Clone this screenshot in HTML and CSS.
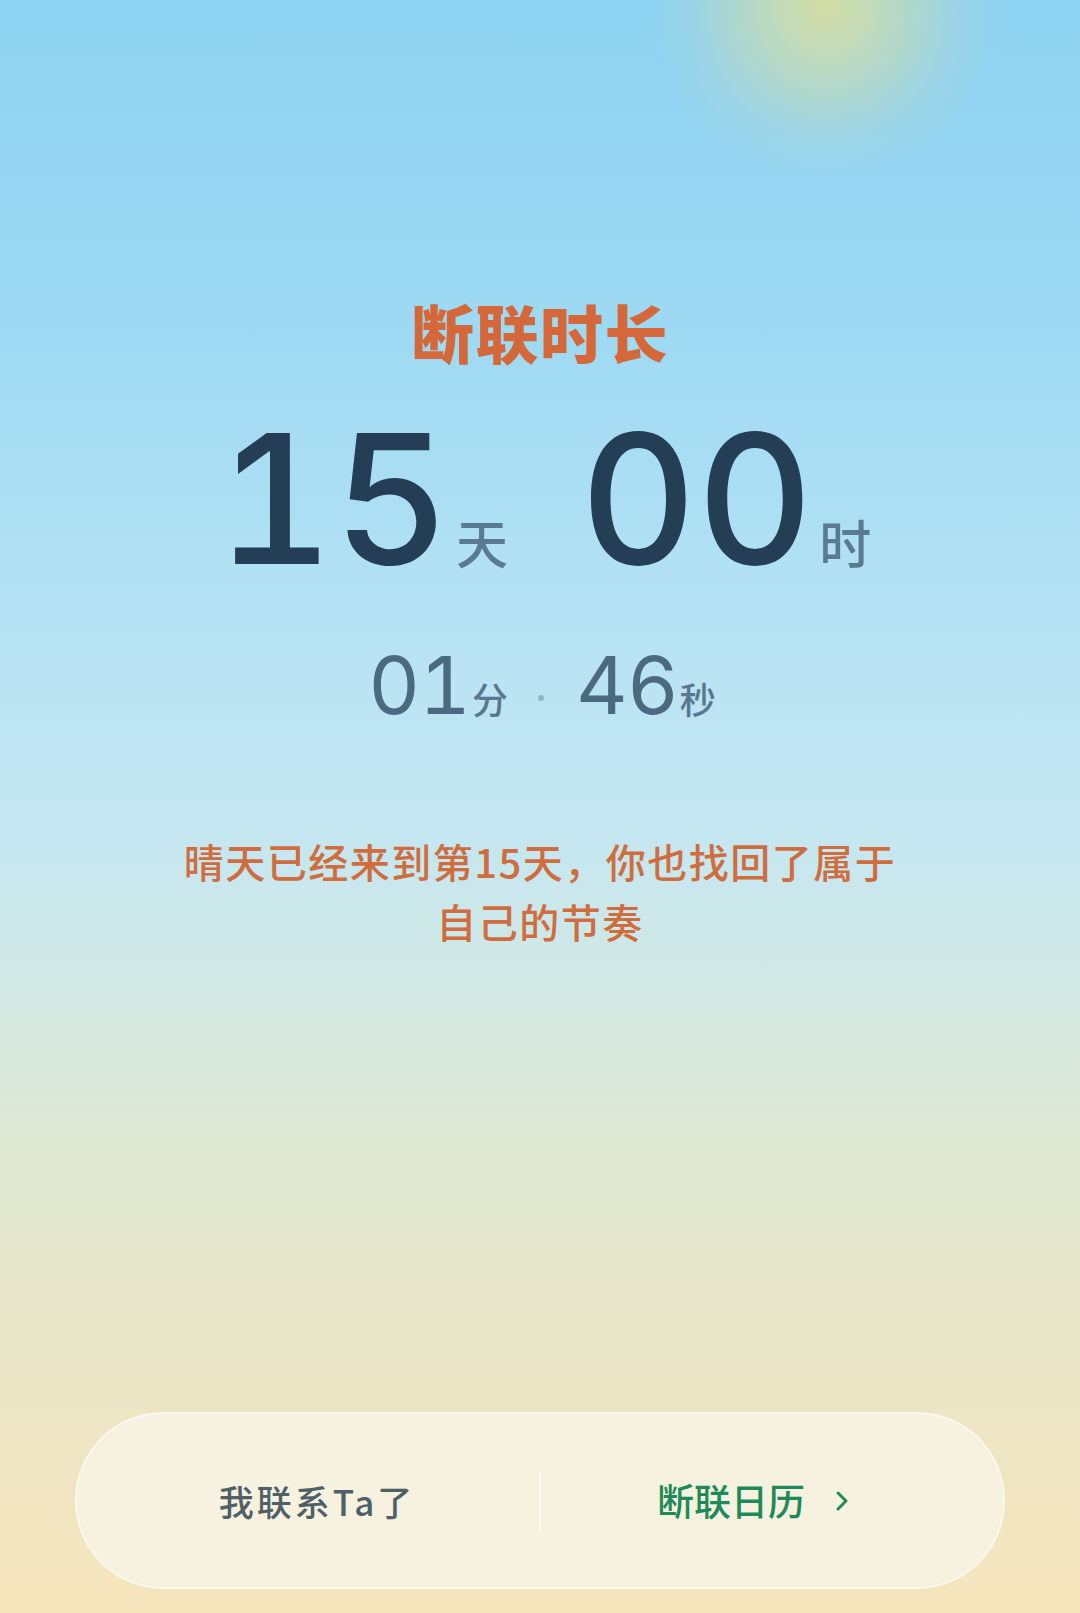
FILE: index.html
```html
<!DOCTYPE html>
<html lang="zh-CN">
<head>
<meta charset="utf-8">
<title>断联时长</title>
<link rel="stylesheet" href="styles.css">
</head>
<body>
<div class="screen">
  <h1 class="title">断联时长</h1>
  <div class="big-row">
    <span class="big-num">15</span><span class="big-unit">天</span>
    <span class="big-num second">00</span><span class="big-unit">时</span>
  </div>
  <div class="small-row">
    <span class="small-num">01</span><span class="small-unit">分</span>
    <span class="dot"></span>
    <span class="small-num">46</span><span class="small-unit second">秒</span>
  </div>
  <p class="message">晴天已经来到第15天，你也找回了属于自己的节奏</p>
  <div class="bar">
    <div class="btn btn-left">我联系Ta了</div>
    <div class="divider"></div>
    <div class="btn btn-right">断联日历
      <svg class="chev" width="14" height="22" viewBox="0 0 14 22"><path d="M3 3 L11 11 L3 19" fill="none" stroke="#1f8a59" stroke-width="3" stroke-linecap="round" stroke-linejoin="round"/></svg>
    </div>
  </div>
</div>
</body>
</html>
```
FILE: styles.css
```css
html, body {
  margin: 0;
  padding: 0;
}
body {
  font-family: "Noto Sans CJK SC", "Noto Sans", sans-serif;
}
.screen {
  width: 1080px;
  height: 1613px;
  display: flex;
  flex-direction: column;
  align-items: center;
  overflow: hidden;
  background:
    radial-gradient(circle at 826px 6px, rgba(214,220,160,0.95) 0px, rgba(205,220,172,0.85) 40px, rgba(188,217,192,0.7) 90px, rgba(168,213,218,0.45) 132px, rgba(150,212,240,0) 176px),
    linear-gradient(to bottom, #8dd2f1 0px, #9fdaf3 350px, #b8e3f4 650px, #c6e7f0 850px, #d3e8e2 1000px, #e0e8d3 1150px, #e9e6c9 1330px, #efe6c3 1450px, #f5e5bc 1613px);
}
.title {
  margin: 299px 0 0;
  font-size: 63px;
  line-height: 64px;
  font-weight: 900;
  color: #d4683a;
  letter-spacing: 1.5px;
}
.big-row {
  margin-top: 46px;
  display: flex;
  align-items: baseline;
  padding-left: 8px;
}
.big-num {
  font-family: Inter, "Noto Sans", sans-serif;
  font-variant-numeric: tabular-nums;
  font-size: 180px;
  line-height: 1;
  font-weight: 500;
  color: #243f55;
}
.big-num.second {
  margin-left: 72px;
}
.big-unit {
  font-size: 52px;
  line-height: 1;
  font-weight: 500;
  color: #5a7a92;
  margin-left: 6px;
}
.small-row {
  margin-top: 56px;
  display: flex;
  align-items: baseline;
  padding-left: 4px;
}
.small-num {
  font-family: Inter, "Noto Sans", sans-serif;
  font-variant-numeric: tabular-nums;
  font-size: 80px;
  line-height: 1;
  font-weight: 400;
  color: #4b6a80;
  letter-spacing: -1px;
}
.small-unit {
  font-size: 36px;
  line-height: 1;
  font-weight: 500;
  color: #587790;
  margin-left: 2px;
}
.small-unit.second {
  margin-left: 2px;
}
.dot {
  width: 6px;
  height: 6px;
  border-radius: 50%;
  background: #93b4c6;
  margin: 0 32px 0 30px;
  align-self: center;
  position: relative;
  top: 13px;
}
.message {
  margin: 106px 0 0;
  width: 740px;
  text-align: center;
  font-size: 40px;
  line-height: 60px;
  letter-spacing: 1.5px;
  color: #cf6d3f;
  font-weight: 500;
}
.bar {
  margin-top: auto;
  margin-bottom: 24px;
  width: 930px;
  height: 177px;
  box-sizing: border-box;
  border-radius: 88px;
  background: rgba(247, 243, 226, 0.9);
  border: 2px solid rgba(255, 255, 255, 0.45);
  display: grid;
  grid-template-columns: 1fr 2px 1fr;
  align-items: center;
}
.btn {
  display: flex;
  align-items: center;
  justify-content: center;
  font-size: 35px;
  line-height: 1;
  font-weight: 500;
}
.btn-left {
  color: #4f6068;
  letter-spacing: 3px;
  padding-left: 18px;
}
.btn-right {
  color: #1f8a59;
  font-size: 37px;
  padding-right: 38px;
}
.divider {
  width: 2px;
  height: 60px;
  background: rgba(255, 255, 255, 0.5);
}
.chev {
  margin-left: 30px;
}
```
